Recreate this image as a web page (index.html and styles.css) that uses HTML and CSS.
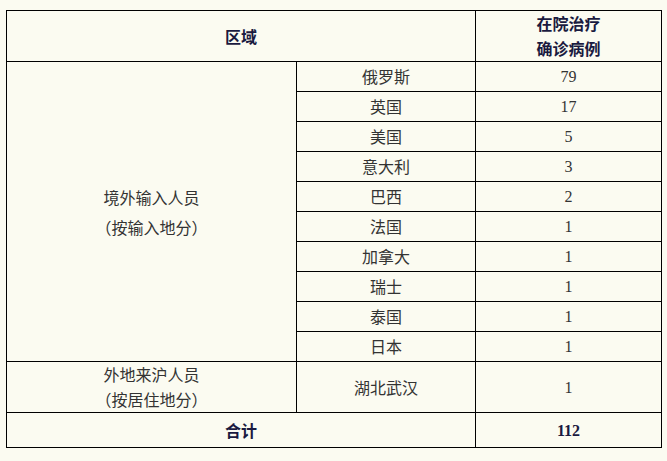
FILE: index.html
```html
<!DOCTYPE html>
<html lang="zh-CN">
<head>
<meta charset="utf-8">
<title>在院治疗确诊病例</title>
<link rel="stylesheet" href="styles.css">
</head>
<body>
<table class="tbl">
  <colgroup>
    <col class="c1">
    <col class="c2">
    <col class="c3">
  </colgroup>
  <tr class="head">
    <th colspan="2">区域</th>
    <th>在院治疗<br>确诊病例</th>
  </tr>
  <tr class="row">
    <td rowspan="10" class="group tall">境外输入人员<br>（按输入地分）</td>
    <td>俄罗斯</td><td class="num">79</td>
  </tr>
  <tr class="row"><td>英国</td><td class="num">17</td></tr>
  <tr class="row"><td>美国</td><td class="num">5</td></tr>
  <tr class="row"><td>意大利</td><td class="num">3</td></tr>
  <tr class="row"><td>巴西</td><td class="num">2</td></tr>
  <tr class="row"><td>法国</td><td class="num">1</td></tr>
  <tr class="row"><td>加拿大</td><td class="num">1</td></tr>
  <tr class="row"><td>瑞士</td><td class="num">1</td></tr>
  <tr class="row"><td>泰国</td><td class="num">1</td></tr>
  <tr class="row"><td>日本</td><td class="num">1</td></tr>
  <tr class="mid">
    <td class="group">外地来沪人员<br>（按居住地分）</td>
    <td>湖北武汉</td><td class="num">1</td>
  </tr>
  <tr class="total">
    <th colspan="2">合计</th>
    <th class="num">112</th>
  </tr>
</table>
</body>
</html>
```
FILE: styles.css
```css
html, body {
  margin: 0;
  background: #fbfbf1;
}
body {
  padding: 10px 0 0 6px;
  font-family: "Noto Sans CJK SC", "Liberation Sans", sans-serif;
  font-size: 16px;
  color: #333333;
}
.tbl {
  border-collapse: collapse;
  table-layout: fixed;
  width: 655px;
}
.c1 { width: 290px; }
.c2 { width: 179px; }
.c3 { width: 186px; }
.tbl th, .tbl td {
  border: 1px solid #000000;
  padding: 0;
  text-align: center;
  vertical-align: middle;
  line-height: 25px;
}
.tbl th {
  font-weight: bold;
  color: #1a1a40;
}
.head th { height: 50px; }
.row td { height: 29px; }
.mid td { height: 50px; }
.total th { height: 34px; }
.group.tall { line-height: 30px; }
.num {
  font-family: "Liberation Serif", serif;
  font-size: 16px;
}
```
